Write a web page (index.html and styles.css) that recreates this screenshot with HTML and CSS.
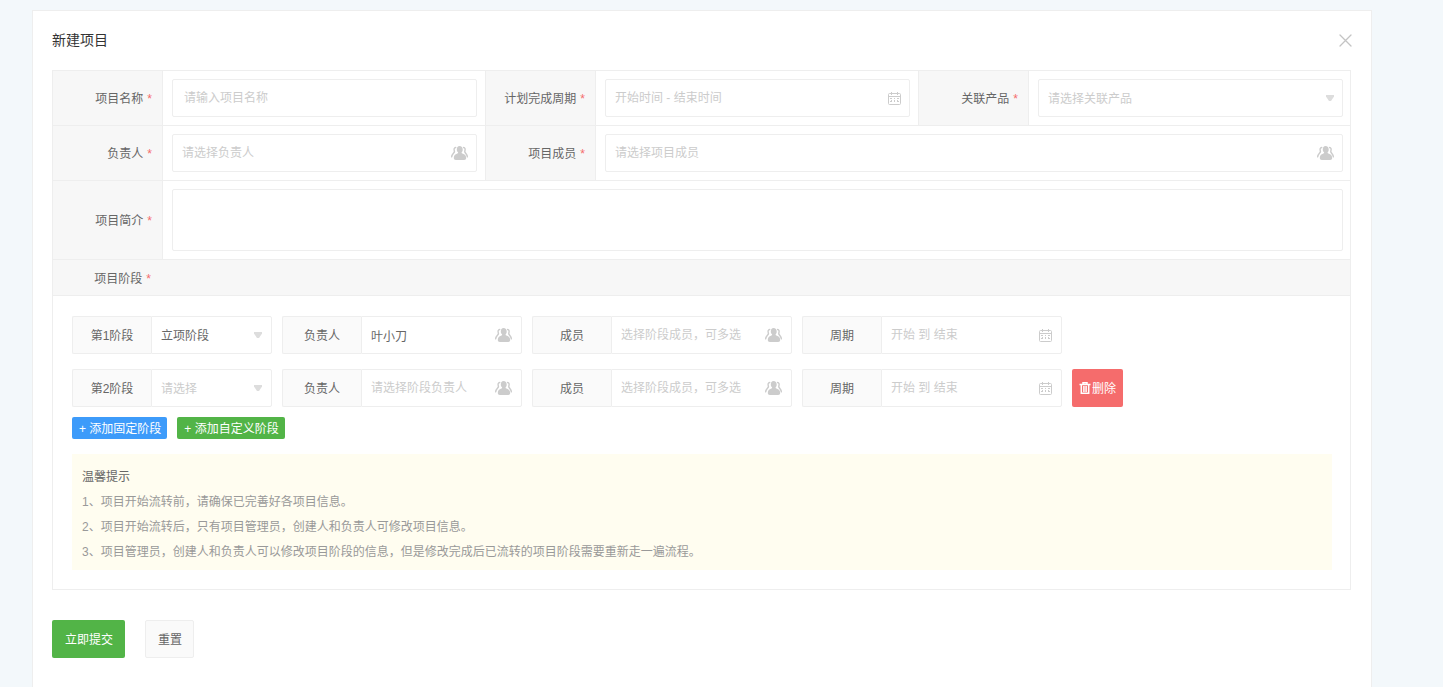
FILE: index.html
```html
<!DOCTYPE html>
<html lang="zh-CN">
<head>
<meta charset="utf-8">
<meta name="viewport" content="width=device-width, initial-scale=1">
<title>新建项目</title>
<link rel="stylesheet" href="styles.css">
</head>
<body>
<svg class="sprite" aria-hidden="true">
  <symbol id="people" viewBox="0 0 17 14">
    <path fill="currentColor" d="M8.500 0C10.500 0 11.700 1.400 11.700 3.400c0 1.300-.4 2.200-1 2.900-.3.600 0 1 .7 1.200 2.400.7 3.800 2.100 3.800 4.600 0 1.300-.8 1.900-2 1.900H4.800c-1.200 0-2-.6-2-1.900 0-2.500 1.200-3.900 3.600-4.600.6-.2.900-.6.600-1.200-.7-.7-1.200-1.600-1.200-2.900C5.800 1.400 6.800 0 8.500 0z"/>
    <path fill="none" stroke="currentColor" stroke-width="1.400" stroke-linecap="round" d="M4.700 1.500C3.200 1.600 2.900 3 3.200 4.300c.2.800.4 1.200.1 1.900C2.800 7.100.9 8.200.7 10.800M12.600 1.500c1.400.1 1.700 1.500 1.400 2.800-.2.800-.4 1.200-.1 1.900.5.900 2.200 2 2.400 4.600"/>
  </symbol>
  <symbol id="calendar" viewBox="0 0 13 13">
    <path fill="none" stroke="currentColor" d="M1.500 1.500h10q1 0 1 1v9q0 1-1 1h-10q-1 0-1-1v-9q0-1 1-1zM.5 4.500h12"/>
    <path fill="currentColor" d="M3 0h1v3H3zM9 0h1v3H9zM2 6h2v1H2zM6 6h1v1H6zM9 6h2v1H9zM3 8h1v1H3zM6 8h1v1H6zM9 8h1v1H9zM2 9h2v1H2zM6 9h1v1H6zM9 9h2v1H9z"/>
  </symbol>
  <symbol id="caret" viewBox="0 0 8 6">
    <path fill="currentColor" d="M0 0h8v1.500L5 6H3L0 1.500z"/>
  </symbol>
  <symbol id="close" viewBox="0 0 13 13">
    <path fill="none" stroke="currentColor" stroke-width="1.300" stroke-linecap="round" d="M1 1l11 11M12 1L1 12"/>
  </symbol>
  <symbol id="trash" viewBox="0 0 11 12">
    <path fill="none" stroke="currentColor" stroke-width="1.500" d="M0 2.500h11M3.500 2.500V.8h4v1.700M1.800 2.500v8.700h7.400V2.500M4.400 4v6M6.600 4v6"/>
  </symbol>
</svg>

<main class="card">
  <header class="card-head">
    <h1 class="card-title">新建项目</h1>
    <button class="close" type="button" aria-label="关闭"><svg class="icon-close"><use href="#close"/></svg></button>
  </header>

  <form class="form">
    <div class="grid">
      <label class="cell-label" for="name">项目名称 <span class="req">*</span></label>
      <div class="cell"><input class="input input-name" id="name" type="text" placeholder="请输入项目名称"></div>
      <label class="cell-label" for="period">计划完成周期 <span class="req">*</span></label>
      <div class="cell"><div class="control"><input class="input" id="period" type="text" placeholder="开始时间 - 结束时间"><svg class="icon icon-cal"><use href="#calendar"/></svg></div></div>
      <label class="cell-label" for="product">关联产品 <span class="req">*</span></label>
      <div class="cell cell-last"><div class="control"><select class="input empty" id="product"><option>请选择关联产品</option></select><svg class="icon icon-caret"><use href="#caret"/></svg></div></div>

      <label class="cell-label" for="owner">负责人 <span class="req">*</span></label>
      <div class="cell"><div class="control"><input class="input" id="owner" type="text" placeholder="请选择负责人"><svg class="icon icon-people"><use href="#people"/></svg></div></div>
      <label class="cell-label" for="members">项目成员 <span class="req">*</span></label>
      <div class="cell cell-last span-3"><div class="control"><input class="input" id="members" type="text" placeholder="请选择项目成员"><svg class="icon icon-people"><use href="#people"/></svg></div></div>

      <label class="cell-label" for="intro">项目简介 <span class="req">*</span></label>
      <div class="cell cell-last span-5"><textarea class="input textarea" id="intro"></textarea></div>

      <h2 class="stage-head"><span class="stage-title">项目阶段 <span class="req">*</span></span></h2>

      <div class="stages">
        <div class="stage-row">
          <div class="group group-s"><label class="addon" for="s1">第1阶段</label><div class="control"><select class="input" id="s1"><option>立项阶段</option></select><svg class="icon icon-caret"><use href="#caret"/></svg></div></div>
          <div class="group group-m"><label class="addon" for="o1">负责人</label><div class="control"><input class="input" id="o1" type="text" value="叶小刀" placeholder="请选择阶段负责人"><svg class="icon icon-people"><use href="#people"/></svg></div></div>
          <div class="group group-l"><label class="addon" for="m1">成员</label><div class="control"><input class="input" id="m1" type="text" placeholder="选择阶段成员，可多选"><svg class="icon icon-people"><use href="#people"/></svg></div></div>
          <div class="group group-l"><label class="addon" for="p1">周期</label><div class="control"><input class="input" id="p1" type="text" placeholder="开始 到 结束"><svg class="icon icon-cal"><use href="#calendar"/></svg></div></div>
        </div>
        <div class="stage-row">
          <div class="group group-s"><label class="addon" for="s2">第2阶段</label><div class="control"><select class="input empty" id="s2"><option>请选择</option></select><svg class="icon icon-caret"><use href="#caret"/></svg></div></div>
          <div class="group group-m"><label class="addon" for="o2">负责人</label><div class="control"><input class="input" id="o2" type="text" placeholder="请选择阶段负责人"><svg class="icon icon-people"><use href="#people"/></svg></div></div>
          <div class="group group-l"><label class="addon" for="m2">成员</label><div class="control"><input class="input" id="m2" type="text" placeholder="选择阶段成员，可多选"><svg class="icon icon-people"><use href="#people"/></svg></div></div>
          <div class="group group-l"><label class="addon" for="p2">周期</label><div class="control"><input class="input" id="p2" type="text" placeholder="开始 到 结束"><svg class="icon icon-cal"><use href="#calendar"/></svg></div></div>
          <button class="btn btn-danger" type="button"><svg class="icon-trash"><use href="#trash"/></svg>删除</button>
        </div>
        <div class="adders">
          <button class="btn btn-mini btn-blue" type="button">+ 添加固定阶段</button>
          <button class="btn btn-mini btn-green" type="button">+ 添加自定义阶段</button>
        </div>
        <section class="tips">
          <h3 class="tips-title">温馨提示</h3>
          <p class="tips-line">1、项目开始流转前，请确保已完善好各项目信息。</p>
          <p class="tips-line">2、项目开始流转后，只有项目管理员，创建人和负责人可修改项目信息。</p>
          <p class="tips-line">3、项目管理员，创建人和负责人可以修改项目阶段的信息，但是修改完成后已流转的项目阶段需要重新走一遍流程。</p>
        </section>
      </div>
    </div>

    <div class="actions">
      <button class="btn btn-submit btn-green" type="submit">立即提交</button>
      <button class="btn btn-plain" type="reset">重置</button>
    </div>
  </form>
</main>
</body>
</html>
```
FILE: styles.css
```css
* {
  box-sizing: border-box;
}

body {
  margin: 0;
  padding: 10px 71px 0 32px;
  background: #f3f8fb;
  color: #666;
  font-family: "Liberation Sans", "Noto Sans CJK SC", sans-serif;
  font-size: 12px;
  line-height: 18px;
}

h1, h2, h3, p {
  margin: 0;
  font-weight: 400;
}

button, input, select, textarea {
  font: inherit;
  color: inherit;
}

.sprite {
  display: none;
}

.card {
  min-height: calc(100vh - 10px);
  padding: 0 20px 20px 19px;
  background: #fff;
  border: 1px solid #eee;
  border-bottom: 0;
}

.card-head {
  display: flex;
  align-items: center;
  justify-content: space-between;
  height: 59px;
}

.card-title {
  padding-bottom: 2px;
  color: #333;
  font-size: 14px;
}

.close {
  display: flex;
  padding: 0 0 1px;
  margin-right: -3px;
  border: 0;
  background: none;
  color: #c4c4c4;
  cursor: pointer;
}

.icon-close {
  width: 17px;
  height: 13px;
}

/* Form grid: three label/field pairs per row */
.grid {
  display: grid;
  grid-template-columns: repeat(3, 110px 1fr);
  border-bottom: 1px solid #eee;
}

.cell,
.cell-label,
.stage-head,
.stages {
  border: solid #eee;
  border-width: 1px 0 0 1px;
}

.cell-label {
  display: flex;
  align-items: center;
  justify-content: flex-end;
  gap: 4px;
  padding: 2px 10px 0 0;
  background: #f7f7f7;
}

.req {
  color: #f56c6c;
}

.cell {
  min-width: 0;
  padding: 8px 8px 8px 9px;
}

.cell-last {
  padding-right: 7px;
}

.cell-last,
.stage-head,
.stages {
  border-right-width: 1px;
}

.span-3 {
  grid-column: span 3;
}

.span-5 {
  grid-column: span 5;
}

.control {
  position: relative;
  flex: 1;
  min-width: 0;
}

.input {
  display: block;
  width: 100%;
  height: 38px;
  padding: 0 9px;
  border: 1px solid #eee;
  border-radius: 2px;
  outline: 0;
  background: #fff;
  appearance: none;
}

select.input {
  padding-top: 2px;
}

.input::placeholder {
  color: #ccc;
  line-height: 20px;
  opacity: 1;
}

.input:focus {
  border-color: #ccc;
}

.input-name {
  padding: 0 11px;
}

.empty {
  color: #ccc;
}

.textarea {
  height: 62px;
  padding: 6px 9px;
  resize: none;
}

.icon {
  position: absolute;
  top: 0;
  bottom: 0;
  right: 9px;
  margin: auto 0;
  color: #ccc;
  pointer-events: none;
}

.group .icon {
  right: 10px;
}

.icon-people {
  width: 17px;
  height: 14px;
}

.icon-cal {
  width: 13px;
  height: 13px;
}

.icon-caret {
  width: 8px;
  height: 6px;
  color: #ddd;
}

/* Stages */
.stage-head {
  grid-column: 1 / -1;
  padding: 10px 0 7px;
  background: #f7f7f7;
  font-size: 12px;
}

.stage-title {
  display: flex;
  gap: 4px;
  justify-content: flex-end;
  width: 98px;
}

.stages {
  grid-column: 1 / -1;
  padding: 20px 18px 19px 19px;
}

.stage-row {
  display: flex;
  flex-wrap: wrap;
  gap: 10px;
  margin-bottom: 15px;
}

.group {
  display: flex;
}

.group-s {
  width: 200px;
}

.group-m {
  width: 240px;
}

.group-l {
  width: 260px;
}

.addon {
  display: flex;
  align-items: center;
  justify-content: center;
  width: 79px;
  padding-top: 2px;
  border: 1px solid #eee;
  border-right: 0;
  border-radius: 2px 0 0 2px;
  background: #fafafa;
}

.group .input {
  border-radius: 0 2px 2px 0;
}

.btn {
  display: inline-flex;
  align-items: center;
  justify-content: center;
  height: 38px;
  border: 0;
  border-radius: 2px;
  color: #fff;
  white-space: nowrap;
  cursor: pointer;
}

.btn-submit {
  padding: 2px 12px 0 13px;
}

.btn-green {
  background: #52b447;
}

.btn-blue {
  background: #3d9bfa;
}

.btn-mini {
  height: 22px;
  padding: 2px 6px 0 7px;
}

.btn-danger {
  gap: 1px;
  padding: 2px 7px 0;
  background: #f56c6c;
}

.icon-trash {
  width: 12px;
  height: 12px;
  margin-bottom: 2px;
}

.btn-plain {
  padding: 2px 11px 0 12px;
  border: 1px solid #eee;
  background: #fafafa;
  color: #666;
}

.adders {
  display: flex;
  gap: 10px;
  margin-top: -5px;
}

.tips {
  margin-top: 15px;
  padding: 11px 10px 5px;
  background: #fffdf0;
  line-height: 25px;
}

.tips-title {
  font-size: 12px;
}

.tips-line {
  color: #999;
}

.actions {
  display: flex;
  gap: 20px;
  margin-top: 30px;
}
```
